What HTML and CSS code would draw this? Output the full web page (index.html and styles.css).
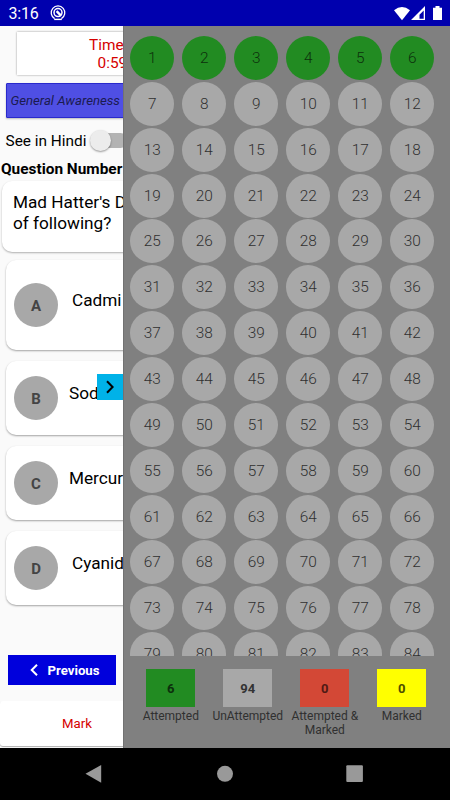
FILE: index.html
```
<!DOCTYPE html>
<html lang="en">
<head>
<meta charset="utf-8">
<title>Quiz</title>
<link rel="stylesheet" href="styles.css">
</head>
<body>
<div class="phone">
  <header class="status">
    <span class="clock">3:16</span>
    <svg class="status-app" width="16" height="16" viewBox="0 0 16 16" fill="none" stroke="#fff">
      <path d="M4.6 13.6A6.8 6.8 0 1 1 11.4 13.6" stroke-width="1.3"/>
      <path d="M4.2 14.4H11.8" stroke-width="1.4"/>
      <circle cx="8" cy="7.6" r="4" stroke-width="1.5"/>
      <path d="M6.6 6.2L11 10.6" stroke-width="2.4"/>
    </svg>
    <svg class="status-icons" width="50" height="16" viewBox="0 0 50 16" fill="#fff">
      <path d="M0 4.2Q8 -2.2 16 4.2L8 14.2Z"/>
      <path fill-rule="evenodd" d="M31 0V14H17ZM29.7 4.5L25.5 8.7V12.7H29.7Z"/>
      <path d="M39 1.8H41.5V0H45.5V1.8H48V14H39Z"/>
    </svg>
  </header>
  <div class="body">
    <main class="quiz">
      <div class="timer"><span>Time</span><span class="time-left">0:59</span></div>
      <div class="subject">General Awareness</div>
      <div class="language"><span>See in Hindi</span><i class="switch"></i></div>
      <h1 class="heading">Question Number</h1>
      <div class="question">Mad Hatter's D<br>of following?</div>
      <div class="option tall"><b class="letter">A</b><span class="answer indent">Cadmi</span></div>
      <div class="option"><b class="letter">B</b><span class="answer">Sod</span></div>
      <div class="option"><b class="letter">C</b><span class="answer">Mercur</span></div>
      <div class="option"><b class="letter">D</b><span class="answer indent">Cyanid</span></div>
      <div class="previous">
        <svg width="8" height="12" viewBox="0 0 8 12" fill="none" stroke="#fff" stroke-width="2"><path d="M7 .7L1.7 6L7 11.3"/></svg>
        <span>Previous</span>
      </div>
      <div class="mark">Mark</div>
      <div class="handle">
        <svg width="8" height="14" viewBox="0 0 8 14" fill="none" stroke="#000" stroke-width="2"><path d="M1 1.2L6.6 7L1 12.8"/></svg>
      </div>
    </main>
    <aside class="drawer">
      <div class="numbers" id="numbers"></div>
      <div class="legend">
        <div class="stat"><b class="count attempted">6</b><span>Attempted</span></div>
        <div class="stat"><b class="count">94</b><span>UnAttempted</span></div>
        <div class="stat"><b class="count both">0</b><span>Attempted &amp;<br>Marked</span></div>
        <div class="stat"><b class="count marked">0</b><span>Marked</span></div>
      </div>
    </aside>
  </div>
  <nav class="nav">
    <svg width="450" height="52" viewBox="0 0 450 52" fill="#999">
      <path d="M85.5 25.8L101.2 17V34.8Z"/>
      <circle cx="225" cy="25.8" r="8"/>
      <rect x="346.3" y="17.3" width="16.6" height="16.8" rx="1"/>
    </svg>
  </nav>
</div>
<script src="script.js"></script>
</body>
</html>
```
FILE: styles.css
```
* { box-sizing: border-box; }
body { margin: 0; font-family: Roboto, sans-serif; color: #000; }
.phone { width: 450px; height: 800px; overflow: hidden; display: flex; flex-direction: column; background: #fafafa; }
.status { height: 26px; flex: none; background: #0000ae; color: #fff; display: flex; align-items: center; padding: 0 0 0 8.5px; }
.clock { font-size: 16px; line-height: 26px; width: 41.5px; padding-top: 1px; letter-spacing: -.2px; }
.status-icons { margin-left: auto; margin-right: 6px; position: relative; top: 1px; }
.body { height: 722px; flex: none; display: flex; }
.quiz { width: 123px; height: 722px; overflow: hidden; position: relative; display: flex; flex-direction: column; flex: none; white-space: nowrap; }
.timer { margin: 6px 0 0 17px; width: 130px; height: 43px; flex: none; background: #fff; box-shadow: 0 0 2px rgba(0,0,0,.4); color: #d50000; font-size: 15.4px; line-height: 17.5px; padding: 5px 0 0 72px; display: flex; flex-direction: column; }
.time-left { padding-left: 8.5px; }
.subject { margin: 8px 0 0 6px; width: 140px; height: 35px; flex: none; background: #4f4fe4; border: 1px solid #2929cc; border-radius: 1px; color: #1b1b50; font-style: italic; font-size: 13.2px; line-height: 34px; padding-left: 3.5px; box-shadow: 0 1px 2px rgba(0,0,0,.25); }
.language { display: flex; align-items: center; height: 22px; flex: none; margin-top: 12px; padding-left: 5.5px; font-size: 15.4px; }
.switch { flex: none; margin-left: 6px; width: 36px; height: 15px; border-radius: 8px; background: #b3b3b3; position: relative; top: -1px; }
.switch::before { content: ""; position: absolute; left: -2px; top: -3px; width: 21px; height: 21px; border-radius: 50%; background: #ececec; box-shadow: 0 1px 2px rgba(0,0,0,.4); }
.heading { margin: 8px 0 0 1px; font-size: 15.4px; line-height: 18px; height: 18px; flex: none; font-weight: 700; }
.question { margin: 3px 0 0 2px; width: 160px; height: 71px; flex: none; background: #fff; border-radius: 10px; box-shadow: 0 1px 2px rgba(0,0,0,.3); padding: 11px 0 0 11px; font-size: 17.2px; line-height: 20.5px; }
.option { margin: 11.2px 0 0 5.5px; width: 160px; height: 74px; flex: none; background: #fff; border-radius: 10px; box-shadow: 0 1px 2px rgba(0,0,0,.35); display: flex; align-items: center; padding-left: 8.5px; }
.option.tall { height: 89.5px; margin-top: 8px; }
.letter { width: 44px; height: 44px; border-radius: 50%; background: #a8a8a8; color: #444; text-align: center; font-size: 15px; line-height: 46px; flex: none; }
.answer { font-size: 17.2px; line-height: 20px; margin-left: 11px; position: relative; top: -5px; }
.indent { margin-left: 14px; }
.previous { margin: 49.5px 0 0 8px; width: 108px; height: 30px; flex: none; background: #0000dc; color: #fff; display: flex; align-items: center; padding: 1px 0 0 22px; gap: 9.5px; font-size: 13.2px; font-weight: 700; }
.mark { margin: 16px 0 0 0; width: 160px; height: 45px; flex: none; background: #fff; border-radius: 3px; box-shadow: 0 1px 1px rgba(0,0,0,.3); color: #d50000; font-size: 13.2px; line-height: 46px; padding-left: 62px; }
.handle { position: absolute; left: 97px; top: 348px; width: 26px; height: 26px; background: #00b2e8; display: flex; align-items: center; justify-content: center; }
.drawer { width: 327px; background: #808080; border-left: 1px solid #727272; }
.numbers { height: 630px; overflow: hidden; padding: 10px 0 0 6.3px; display: grid; grid-template-columns: repeat(6, 52px); grid-auto-rows: 45.87px; }
.number { width: 44px; height: 44px; border-radius: 50%; background: #a8a8a8; color: #303030; text-align: center; font-size: 15.4px; font-weight: 300; line-height: 45px; }
.number.done { background: #228b22; color: #0c300c; }
.legend { display: flex; padding: 13px 0 0 8.3px; }
.stat { width: 77px; display: flex; flex-direction: column; align-items: center; text-align: center; font-size: 12px; line-height: 14px; color: #303030; white-space: nowrap; }
.count { width: 49px; height: 38px; background: #a8a8a8; color: #333; font-size: 13px; line-height: 39px; margin-bottom: 2px; }
.count.attempted { background: #228b22; color: #0c300c; }
.count.both { background: #d34836; color: #501a14; }
.count.marked { background: #ff0; color: #4d4d00; }
.nav { height: 52px; flex: none; background: #000; }
.nav svg { display: block; }
```
FILE: script.js
```
const grid = document.getElementById("numbers");
for (let n = 1; n <= 84; n++) {
  const cell = document.createElement("div");
  cell.className = n <= 6 ? "number done" : "number";
  cell.textContent = n;
  grid.appendChild(cell);
}
```
